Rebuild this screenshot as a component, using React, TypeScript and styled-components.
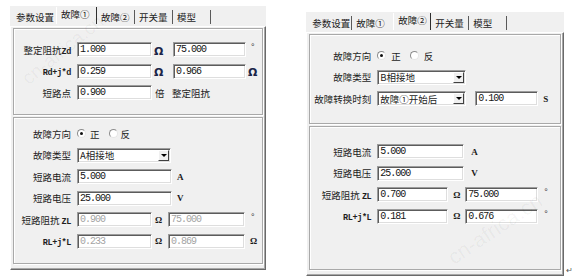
import * as React from 'react';
import styled, { createGlobalStyle } from 'styled-components';

const GlobalStyle = createGlobalStyle`
  html, body {
    margin: 0;
    padding: 0;
    background: #ffffff;
  }
  body {
    font-family: "Noto Sans CJK SC", "Liberation Sans", sans-serif;
    font-size: 9.5px;
    color: #1c1c1c;
  }
`;

const Page = styled.div`
  display: flex;
  gap: 40px;
  padding: 6px 0 0 10px;
  width: 573px;
  height: 276px;
  box-sizing: border-box;
`;

const Side = styled.div`
  display: flex;
  align-items: flex-end;
`;

const ReturnMark = styled.span`
  margin: 0 0 1px 2px;
  font-family: "DejaVu Sans", sans-serif;
  font-size: 8px;
  line-height: 9px;
  color: #555;
`;

const Window = styled.div`
  position: relative;
  width: 258px;
  height: 264px;
  background: #f0f0f0;
  display: flex;
  flex-direction: column;
  overflow: hidden;
`;

const TabStrip = styled.div`
  height: 20px;
  display: flex;
  align-items: flex-end;
  padding: 0 0 2px 2px;
  box-sizing: border-box;
`;

const Tab = styled.div<{ $w: number; $active?: boolean; $sep?: boolean }>`
  width: ${({ $w }) => $w}px;
  height: ${({ $active }) => ($active ? 17 : 14)}px;
  line-height: 14px;
  padding-left: ${({ $active }) => ($active ? 4 : 3)}px;
  box-sizing: border-box;
  white-space: nowrap;
  border-left: 1px solid ${({ $active }) => ($active ? '#ffffff' : 'transparent')};
  border-right: 1px solid ${({ $active, $sep }) => ($active ? '#2e2e2e' : $sep ? '#5a5a5a' : 'transparent')};
`;

const TabPage = styled.div`
  flex: 1;
  display: flex;
  flex-direction: column;
  gap: 2px;
  padding: 1px 2px 5px 2px;
  border-top: 1px solid #ffffff;
  border-left: 1px solid #ffffff;
  border-right: 1px solid #6a6a6a;
  border-bottom: 1px solid #6a6a6a;
  box-shadow: inset -1px -1px 0 #a8a8a8;
`;

const Group = styled.div<{ $h?: number; $pt: number }>`
  ${({ $h }) => ($h ? `height: ${$h}px;` : 'flex: 1;')}
  box-sizing: border-box;
  display: flex;
  flex-direction: column;
  gap: 6.5px;
  padding-top: ${({ $pt }) => $pt}px;
  border: 1px solid #a9a9a9;
  box-shadow: inset 1px 1px 0 #ffffff, 1px 1px 0 #ffffff;
`;

const Row = styled.div`
  display: flex;
  align-items: center;
  height: 15px;
`;

const Label = styled.span<{ $w: number }>`
  width: ${({ $w }) => $w}px;
  margin-right: 6px;
  text-align: right;
  white-space: nowrap;
  color: #1e1e1e;
`;

const Latin = styled.span`
  font-family: "Liberation Mono", monospace;
  font-weight: bold;
  font-size: 8.5px;
  letter-spacing: -0.4px;
`;

const Field = styled.div<{ $w: number; $off?: boolean; $ml?: number }>`
  width: ${({ $w }) => $w}px;
  height: 15px;
  margin-left: ${({ $ml }) => $ml ?? 0}px;
  box-sizing: border-box;
  padding-left: 2px;
  background: #ffffff;
  border-top: 1px solid #9c9c9c;
  border-left: 1px solid #9c9c9c;
  border-right: 1px solid #ffffff;
  border-bottom: 1px solid #ffffff;
  box-shadow: inset 1px 1px 0 #5c5c5c, inset -1px -1px 0 #dedede;
  font-family: "Liberation Mono", monospace;
  font-size: 10px;
  letter-spacing: -1px;
  line-height: 13px;
  color: ${({ $off }) => ($off ? '#a4a4a4' : '#141414')};
  white-space: nowrap;
`;

const Select = styled.div<{ $w: number }>`
  width: ${({ $w }) => $w}px;
  height: 15px;
  box-sizing: border-box;
  display: flex;
  align-items: center;
  justify-content: space-between;
  padding: 0 1px 0 2px;
  background: #ffffff;
  border-top: 1px solid #9c9c9c;
  border-left: 1px solid #9c9c9c;
  border-right: 1px solid #ffffff;
  border-bottom: 1px solid #ffffff;
  box-shadow: inset 1px 1px 0 #5c5c5c, inset -1px -1px 0 #dedede;
  white-space: nowrap;
`;

const DropButton = styled.span`
  width: 11px;
  height: 11px;
  box-sizing: border-box;
  display: flex;
  align-items: center;
  justify-content: center;
  background: #f0f0f0;
  border-top: 1px solid #ffffff;
  border-left: 1px solid #ffffff;
  border-right: 1px solid #404040;
  border-bottom: 1px solid #404040;

  &::after {
    content: '';
    border-left: 3px solid transparent;
    border-right: 3px solid transparent;
    border-top: 3px solid #000000;
  }
`;

const Radio = styled.span<{ $on?: boolean; $ml?: number }>`
  width: 9px;
  height: 9px;
  margin-left: ${({ $ml }) => $ml ?? 0}px;
  box-sizing: border-box;
  border-radius: 50%;
  display: inline-flex;
  align-items: center;
  justify-content: center;
  background: #ffffff;
  border: 1px solid;
  border-color: #8c8c8c #e6e6e6 #e6e6e6 #8c8c8c;

  &::after {
    content: '';
    width: 3px;
    height: 3px;
    border-radius: 50%;
    background: ${({ $on }) => ($on ? '#111111' : 'transparent')};
  }
`;

const Choice = styled.span<{ $ml: number }>`
  margin-left: ${({ $ml }) => $ml}px;
`;

const Unit = styled.span<{ $w?: number; $pl: number; $kind?: 'big' | 'serif' | 'text' }>`
  ${({ $w }) => ($w ? `width: ${$w}px;` : '')}
  padding-left: ${({ $pl }) => $pl}px;
  box-sizing: border-box;
  white-space: nowrap;
  ${({ $kind }) =>
    $kind === 'big'
      ? 'font-family: "DejaVu Sans", sans-serif; font-weight: bold; font-size: 11px; color: #1b2548; padding-top: 3px;'
      : $kind === 'serif'
      ? 'font-family: "Liberation Serif", serif; font-weight: bold; font-size: 9px; color: #1a1a1a;'
      : ''}
`;

const Degree = styled.span<{ $pl: number }>`
  padding-left: ${({ $pl }) => $pl}px;
  margin-top: -5px;
  font-family: "Liberation Sans", sans-serif;
  font-size: 9px;
  color: #333;
`;

const Watermark = styled.span<{ $x: number; $y: number; $rot: number; $size: number }>`
  position: absolute;
  left: ${({ $x }) => $x}px;
  top: ${({ $y }) => $y}px;
  transform: translate(-50%, -50%) rotate(${({ $rot }) => $rot}deg);
  font-family: "Liberation Sans", sans-serif;
  font-size: ${({ $size }) => $size}px;
  color: rgba(0, 0, 0, 0.045);
  white-space: nowrap;
  pointer-events: none;
`;

const TABS = ['参数设置', '故障①', '故障②', '开关量', '模型'];
const TAB_W = [44, 41, 38, 38, 38];

const Tabs = ({ active }: { active: number }) => (
  <TabStrip>
    {TABS.map((t, i) => (
      <Tab key={t} $w={TAB_W[i]} $active={i === active} $sep={i !== active - 1}>
        {t}
      </Tab>
    ))}
  </TabStrip>
);

const Fault1Panel = () => (
  <Window>
    <Tabs active={1} />
    <TabPage>
      <Group $h={87} $pt={13}>
        <Row>
          <Label $w={57}>
            整定阻抗<Latin>Zd</Latin>
          </Label>
          <Field $w={75}>1.000</Field>
          <Unit $w={21} $pl={2} $kind="big">Ω</Unit>
          <Field $w={73}>75.000</Field>
          <Degree $pl={5}>°</Degree>
        </Row>
        <Row>
          <Label $w={57}>
            <Latin>Rd+j*d</Latin>
          </Label>
          <Field $w={75}>0.259</Field>
          <Unit $w={21} $pl={2} $kind="big">Ω</Unit>
          <Field $w={73}>0.966</Field>
          <Unit $pl={2} $kind="big">Ω</Unit>
        </Row>
        <Row>
          <Label $w={57}>短路点</Label>
          <Field $w={75}>0.900</Field>
          <Unit $w={20} $pl={3} $kind="text">倍</Unit>
          <span>整定阻抗</span>
        </Row>
      </Group>
      <Group $pt={8}>
        <Row>
          <Label $w={57}>故障方向</Label>
          <Radio $on />
          <Choice $ml={4}>正</Choice>
          <Radio $ml={9} />
          <Choice $ml={3}>反</Choice>
        </Row>
        <Row>
          <Label $w={57}>故障类型</Label>
          <Select $w={94}>
            A相接地
            <DropButton />
          </Select>
        </Row>
        <Row>
          <Label $w={57}>短路电流</Label>
          <Field $w={95}>5.000</Field>
          <Unit $pl={5} $kind="serif">A</Unit>
        </Row>
        <Row>
          <Label $w={57}>短路电压</Label>
          <Field $w={95}>25.000</Field>
          <Unit $pl={5} $kind="serif">V</Unit>
        </Row>
        <Row>
          <Label $w={57}>
            短路阻抗 <Latin>ZL</Latin>
          </Label>
          <Field $w={75} $off>0.900</Field>
          <Unit $w={16} $pl={3} $kind="serif">Ω</Unit>
          <Field $w={77} $off>75.000</Field>
          <Degree $pl={6}>°</Degree>
        </Row>
        <Row>
          <Label $w={57}>
            <Latin>RL+j*L</Latin>
          </Label>
          <Field $w={75} $off>0.233</Field>
          <Unit $w={16} $pl={3} $kind="serif">Ω</Unit>
          <Field $w={77} $off>0.869</Field>
          <Unit $pl={5} $kind="serif">Ω</Unit>
        </Row>
      </Group>
    </TabPage>
    <Watermark $x={53} $y={44} $rot={-39} $size={19}>cn-africa.cn</Watermark>
  </Window>
);

const Fault2Panel = () => (
  <Window>
    <Tabs active={2} />
    <TabPage>
      <Group $h={90} $pt={13}>
        <Row>
          <Label $w={61}>故障方向</Label>
          <Radio $on />
          <Choice $ml={5}>正</Choice>
          <Radio $ml={9} />
          <Choice $ml={5}>反</Choice>
        </Row>
        <Row>
          <Label $w={61}>故障类型</Label>
          <Select $w={89}>
            B相接地
            <DropButton />
          </Select>
        </Row>
        <Row>
          <Label $w={61}>故障转换时刻</Label>
          <Select $w={89}>
            故障①开始后
            <DropButton />
          </Select>
          <Field $w={63} $ml={9}>0.100</Field>
          <Unit $pl={5} $kind="serif">S</Unit>
        </Row>
      </Group>
      <Group $pt={17}>
        <Row>
          <Label $w={61}>短路电流</Label>
          <Field $w={87}>5.000</Field>
          <Unit $pl={7} $kind="serif">A</Unit>
        </Row>
        <Row>
          <Label $w={61}>短路电压</Label>
          <Field $w={87}>25.000</Field>
          <Unit $pl={7} $kind="serif">V</Unit>
        </Row>
        <Row>
          <Label $w={61}>
            短路阻抗 <Latin>ZL</Latin>
          </Label>
          <Field $w={71}>0.700</Field>
          <Unit $w={17} $pl={5} $kind="serif">Ω</Unit>
          <Field $w={73}>75.000</Field>
          <Degree $pl={6}>°</Degree>
        </Row>
        <Row>
          <Label $w={61}>
            <Latin>RL+j*L</Latin>
          </Label>
          <Field $w={71}>0.181</Field>
          <Unit $w={17} $pl={5} $kind="serif">Ω</Unit>
          <Field $w={73}>0.676</Field>
          <Degree $pl={6}>°</Degree>
        </Row>
      </Group>
    </TabPage>
    <Watermark $x={189} $y={217} $rot={-34} $size={21}>cn-africa.cn</Watermark>
  </Window>
);

const App = () => (
  <>
    <GlobalStyle />
    <Page>
      <Fault1Panel />
      <Side>
        <Fault2Panel />
        <ReturnMark>↵</ReturnMark>
      </Side>
    </Page>
  </>
);

export default App;
